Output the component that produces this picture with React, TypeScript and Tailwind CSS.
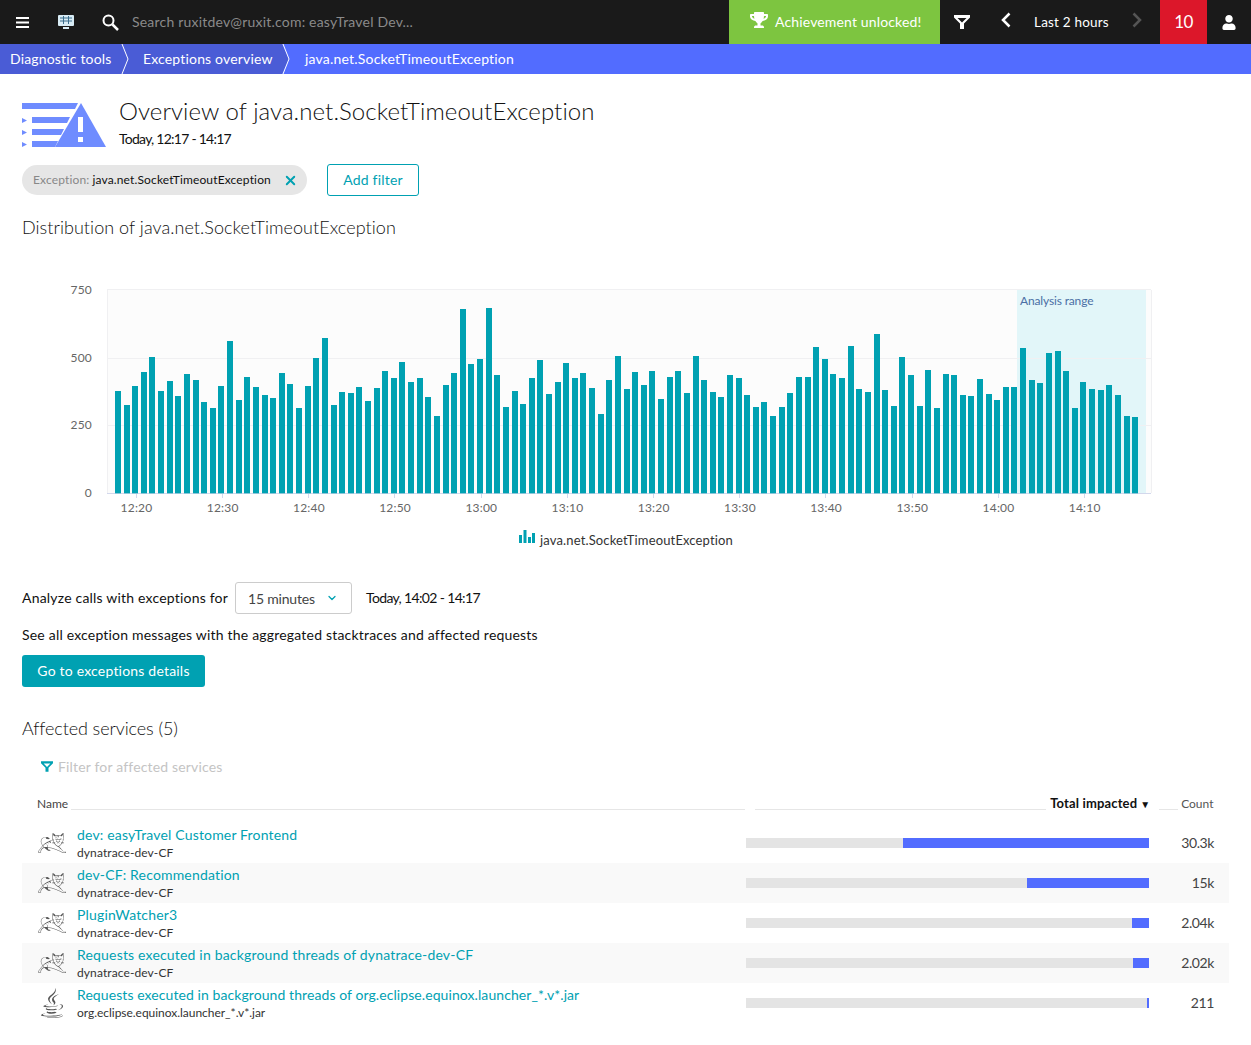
import { ChevronDown, X } from 'lucide-react';
import { FaJava, FaTrophy, FaUser } from 'react-icons/fa';
import { SiApachetomcat } from 'react-icons/si';

// top of every bar in the 3x crops, baseline is 640
const barTops = [
  333, 375, 318, 276, 231, 333, 303, 348, 282, 300, 366, 384, 318, 183, 360, 291, 321, 345, 354, 279,
  312, 384, 318, 234, 174, 375, 336, 339, 321, 363, 324, 273, 294, 246, 306, 294, 351, 408, 315, 279,
  87, 252, 237, 84, 285, 381, 333, 372, 294, 240, 342, 306, 249, 294, 279, 324, 402, 300, 228, 327,
  276, 315, 273, 357, 291, 273, 339, 228, 300, 336, 351, 285, 294, 345, 381, 366, 408, 381, 339, 291,
  291, 201, 237, 282, 294, 198, 327, 336, 162, 330, 378, 231, 285, 378, 270, 384, 282, 285, 345, 348,
  297, 342, 360, 321, 321, 204, 300, 309, 219, 213, 273, 384, 306, 327, 330, 315, 345, 408, 411,
];

const timeLabels = ['12:20', '12:30', '12:40', '12:50', '13:00', '13:10', '13:20', '13:30', '13:40', '13:50', '14:00', '14:10'];

const services = [
  { name: 'dev: easyTravel Customer Frontend', sub: 'dynatrace-dev-CF', blue: 246, count: '30.3k', icon: 'tomcat', nameTrack: 'tracking-[0.17px]', subTrack: 'tracking-[0.1px]' },
  { name: 'dev-CF: Recommendation', sub: 'dynatrace-dev-CF', blue: 122, count: '15k', icon: 'tomcat', nameTrack: 'tracking-[0.17px]', subTrack: 'tracking-[0.1px]' },
  { name: 'PluginWatcher3', sub: 'dynatrace-dev-CF', blue: 17, count: '2.04k', icon: 'tomcat', nameTrack: 'tracking-[0.17px]', subTrack: 'tracking-[0.1px]' },
  { name: 'Requests executed in background threads of dynatrace-dev-CF', sub: 'dynatrace-dev-CF', blue: 16, count: '2.02k', icon: 'tomcat', nameTrack: 'tracking-[0.18px]', subTrack: 'tracking-[0.1px]' },
  { name: 'Requests executed in background threads of org.eclipse.equinox.launcher_*.v*.jar', sub: 'org.eclipse.equinox.launcher_*.v*.jar', blue: 2, count: '211', icon: 'java', nameTrack: 'tracking-[0.08px]', subTrack: 'tracking-[-0.03px]' },
];

const FunnelIcon = ({ className }: { className: string }) => (
  <svg viewBox="0 0 16 14" className={className} fill="currentColor" fillRule="evenodd">
    <path d="M0 0h16v2.500L10 8.500V14H6V8.500L0 2.500zM3.500 3L8 7.500 12.500 3z" />
  </svg>
);

const PageIcon = () => (
  <svg width="84" height="44" viewBox="22 103 84 44" className="shrink-0">
    <g fill="#6f8cff">
      <path d="M22 103h56l-3 6H22z" />
      <path d="M32 117h38l-3 6H32zM32 129h32l-3 6H32zM32 141h26l-3 6H32z" />
      <path d="M22 118l5 2.500-5 2.500zM22 130l5 2.500-5 2.500zM22 142l5 2.500-5 2.500z" />
      <path d="M81 103l25 44H55z" />
    </g>
    <path d="M78 117h5v15h-5zM78 137h5v5h-5z" fill="#fff" />
  </svg>
);

const Chart = () => (
  <svg width="1251" height="272" viewBox="0 280 1251 272" className="block">
    <rect x="107" y="290" width="1044" height="203" fill="#fcfcfc" />
    <rect x="1017" y="290" width="129" height="203" fill="#e2f6f9" />
    <path d="M107 289.500h1044M107 358.500h1044M107 425.500h1044M107.500 290v203M1151.500 290v203" stroke="#f0f0f2" fill="none" />
    <path d="M107 493.500h1044" stroke="#d3d8ec" />
    {timeLabels.map((label, i) => (
      <g key={label}>
        <path d={`M${Math.round(135.700 + i * 86.200) + 0.500} 493v5`} stroke="#d3d8ec" />
        <text x={136.500 + i * 86.200} y="512" textAnchor="middle" fontSize="12" letterSpacing="0.2" fill="#666">{label}</text>
      </g>
    ))}
    {barTops.map((top, i) => (
      <rect key={i} x={Math.round(115 + i * 8.620)} y={280 + top / 3} width="6" height={(640 - top) / 3} fill="#00a1b2" />
    ))}
    {[['750', 294], ['500', 362], ['250', 429], ['0', 497]].map(([label, y]) => (
      <text key={label} x="92" y={y} textAnchor="end" fontSize="12" letterSpacing="0.2" fill="#666">{label}</text>
    ))}
    <text x="1020" y="305" fontSize="12" letterSpacing="-0.15" fill="#4a6fa5">Analysis range</text>
    <path d="M519 543h3v-8h-3zM523.500 543h3v-13h-3zM528 543h3v-6h-3zM532 543h3v-10h-3z" fill="#00a1b2" />
    <text x="540" y="544.500" fontSize="13" letterSpacing="0.15" fill="#333">java.net.SocketTimeoutException</text>
  </svg>
);

const App = () => {
  return (
    <div className="w-[1251px] min-h-[1045px] bg-white text-[14px] text-[#111] font-['Lato','Open_Sans',sans-serif] tracking-[0.2px] overflow-hidden">
      {/* Top bar */}
      <div className="flex items-center h-[44px] bg-[#1a1a1a] text-white">
        <svg width="13" height="11" viewBox="0 0 13 11" className="ml-[16px]" fill="#fff">
          <path d="M0 0h13v2H0zM0 4.500h13v2H0zM0 9h13v2H0z" />
        </svg>
        <svg width="16" height="14" viewBox="0 0 16 14" className="ml-[29px]">
          <rect width="16" height="11" rx="1" fill="#d8ecf5" />
          <path d="M2 3h12M2 6h12M5.500 1v8M10.500 1v8" stroke="#3a6d8c" />
          <path d="M5 12h6v2H5z" fill="#d8ecf5" />
        </svg>
        <svg width="17" height="17" viewBox="0 0 17 17" className="ml-[28px]" fill="none" stroke="#fff">
          <circle cx="6.500" cy="6.500" r="5" strokeWidth="2" />
          <path d="M10.500 10.500l5.500 5.500" strokeWidth="2.500" />
        </svg>
        <span className="ml-[13px] w-[597px] mb-[2px] text-[#8a8a8a]">Search ruxitdev@ruxit.com: easyTravel Dev...</span>
        <div className="flex items-center h-full w-[211px] pl-[21px] bg-[#7dc540]">
          <FaTrophy className="w-[18px] h-[18px] mb-[4px]" />
          <span className="ml-[7px] mb-[2px] tracking-[0.15px] whitespace-nowrap">Achievement unlocked!</span>
        </div>
        <FunnelIcon className="ml-[14px] w-[16px] h-[14px]" />
        <svg width="10" height="16" viewBox="0 0 10 16" className="ml-[31px] mb-[4px]" fill="none" stroke="#fff" strokeWidth="2.500">
          <path d="M8.500 1.500L2 8l6.500 6.500" />
        </svg>
        <span className="ml-[23px] w-[76px] text-[13.500px] whitespace-nowrap">Last 2 hours</span>
        <svg width="10" height="16" viewBox="0 0 10 16" className="ml-[22px] mb-[4px]" fill="none" stroke="#555" strokeWidth="2.500">
          <path d="M1.500 1.500L8 8l-6.500 6.500" />
        </svg>
        <div className="flex items-center justify-center ml-[18px] w-[47px] h-full bg-[#dc172a] text-[17px] tracking-[-0.5px]">10</div>
        <FaUser className="ml-[15px] w-[14px] h-[15px]" />
      </div>

      {/* Breadcrumbs */}
      <div className="flex items-center h-[30px] bg-[#526cff] text-white">
        <div className="flex items-center h-full w-[290px] bg-[#4a5cd6] relative">
          <span className="ml-[10px] mb-[2px] w-[112px] tracking-[0.17px] whitespace-nowrap">Diagnostic tools</span>
          <svg width="8" height="30" viewBox="0 0 8 30" className="-ml-[1px]" fill="none" stroke="#fff">
            <path d="M1 0l6 15-6 15" />
          </svg>
          <span className="ml-[14px] mb-[2px] tracking-[0.17px] whitespace-nowrap">Exceptions overview</span>
          <svg width="8" height="30" viewBox="0 0 8 30" className="absolute right-0 top-0">
            <path d="M0 0h8v30H0l7-15z" fill="#526cff" />
            <path d="M1 0l6 15-6 15" fill="none" stroke="#fff" />
          </svg>
        </div>
        <span className="ml-[15px] mb-[2px]">java.net.SocketTimeoutException</span>
      </div>

      {/* Title */}
      <div className="flex items-start h-[90px] pt-[29px] pl-[22px]">
        <PageIcon />
        <div className="ml-[13px] -mt-[8px]">
          <h1 className="text-[24px] leading-[32px] font-light tracking-[0.07px]">Overview of java.net.SocketTimeoutException</h1>
          <div className="mt-[2px] leading-[20px] tracking-[-0.75px]">Today, 12:17 - 14:17</div>
        </div>
      </div>

      {/* Filters */}
      <div className="flex items-center h-[32px] pl-[22px]">
        <div className="flex items-center h-[30px] w-[285px] pl-[11px] rounded-full bg-[#e6e6e6] text-[12px] tracking-[0.15px]">
          <span className="text-[#888]">Exception:</span>
          <span className="ml-[3px] whitespace-nowrap">java.net.SocketTimeoutException</span>
          <X className="ml-[12px] w-[15px] h-[15px] text-[#00a1b2]" strokeWidth={3} />
        </div>
        <button className="ml-[20px] w-[92px] h-[32px] pb-[2px] border border-[#00a1b2] rounded-[3px] text-[#00a1b2]">Add filter</button>
      </div>

      <h2 className="mt-[17px] pl-[22px] text-[18px] leading-[28px] font-light tracking-[0.05px]">Distribution of java.net.SocketTimeoutException</h2>

      <div className="mt-[39px]">
        <Chart />
      </div>

      {/* Analyze */}
      <div className="flex items-center h-[32px] mt-[30px] pl-[22px]">
        <span className="w-[213px] mb-[2px] whitespace-nowrap">Analyze calls with exceptions for</span>
        <div className="flex items-center w-[117px] h-[32px] pl-[12px] border border-[#ccc] rounded-[3px] text-[#444]">
          <span className="w-[78px] tracking-[-0.2px] whitespace-nowrap">15 minutes</span>
          <ChevronDown className="w-[12px] h-[12px] text-[#00a1b2]" strokeWidth={2.500} />
        </div>
        <span className="ml-[14px] mb-[2px] tracking-[-0.65px] whitespace-nowrap">Today, 14:02 - 14:17</span>
      </div>
      <p className="mt-[11px] pl-[22px] leading-[20px]">See all exception messages with the aggregated stacktraces and affected requests</p>
      <button className="block ml-[22px] mt-[10px] w-[183px] h-[32px] pb-[2px] rounded-[3px] bg-[#00a1b2] text-white">Go to exceptions details</button>

      <h2 className="mt-[27px] pl-[22px] text-[18px] leading-[28px] font-light tracking-[-0.1px]">Affected services (5)</h2>

      <div className="flex items-center h-[20px] mt-[14px] pl-[41px] text-[#c4c4c4]">
        <FunnelIcon className="w-[12px] h-[11px] text-[#00a1b2]" />
        <span className="ml-[5px] tracking-[0.17px]">Filter for affected services</span>
      </div>

      {/* Table */}
      <div className="flex items-center h-[20px] mt-[18px] pl-[37px] text-[12px] tracking-normal">
        <span className="text-[#444]">Name</span>
        <div className="ml-[3px] mt-[10px] w-[674px] h-px bg-[#e6e6e6]" />
        <div className="ml-[10px] mt-[10px] w-[291px] h-px bg-[#e6e6e6]" />
        <span className="ml-[4px] w-[88px] text-[13px] tracking-[0.15px] font-bold whitespace-nowrap">Total impacted</span>
        <span className="ml-[2px] w-[10px] text-[10px]">▼</span>
        <div className="ml-[9px] mt-[10px] w-[19px] h-px bg-[#e6e6e6]" />
        <span className="ml-[3px] text-[#555]">Count</span>
      </div>

      <div className="mt-[9px] mx-[22px] w-[1207px]">
        {services.map((service, i) => (
          <div key={service.name} className={`flex items-center h-[40px] ${i % 2 === 1 ? 'bg-[#f9f9f9]' : ''}`}>
            <div className="flex justify-center w-[28px] ml-[16px] text-[#555]">
              {service.icon === 'tomcat' ? <SiApachetomcat className="w-[28px] h-[28px]" /> : <FaJava className="w-[26px] h-[30px]" />}
            </div>
            <div className="ml-[11px] w-[669px] min-w-0">
              <div className={`text-[#00a1b2] leading-[18px] whitespace-nowrap ${service.nameTrack}`}>{service.name}</div>
              <div className={`text-[12px] leading-[17px] text-[#333] whitespace-nowrap ${service.subTrack}`}>{service.sub}</div>
            </div>
            <div className="flex justify-end w-[403px] h-[10px] bg-[#e4e4e4]">
              <div className="h-full bg-[#526cff]" style={{ width: service.blue }} />
            </div>
            <div className="w-[65px] mb-[2px] text-right text-[#444] tracking-[-0.4px]">{service.count}</div>
          </div>
        ))}
      </div>
    </div>
  );
};

export default App;
